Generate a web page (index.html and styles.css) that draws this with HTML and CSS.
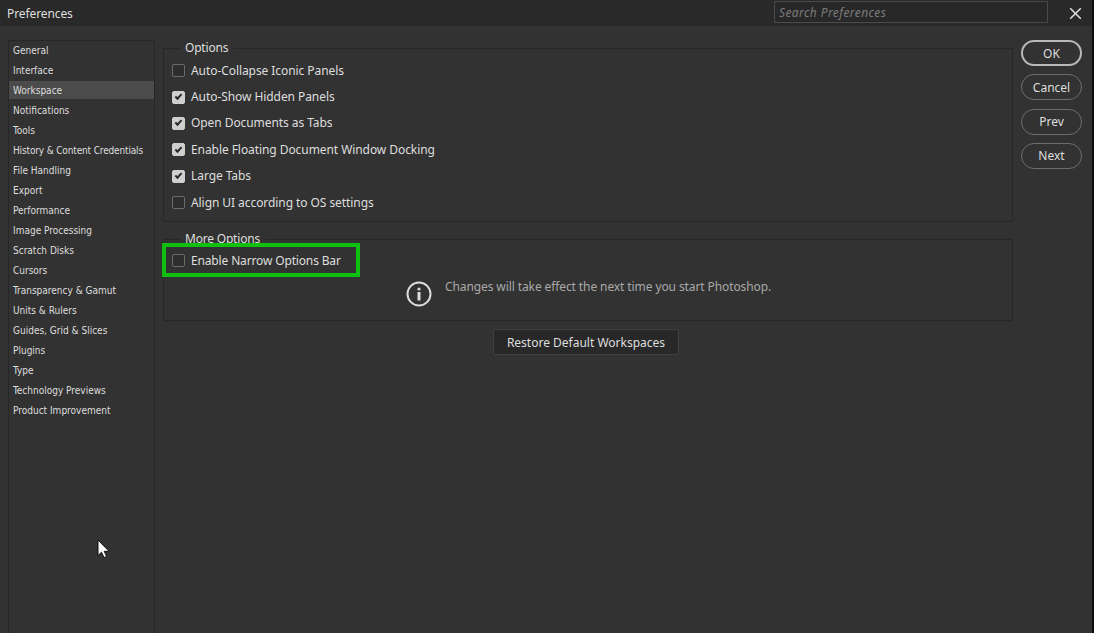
FILE: index.html
```html
<!DOCTYPE html>
<html lang="en">
  <head>
    <meta charset="UTF-8">
    <title>Preferences</title>
    <link rel="stylesheet" href="styles.css">
  </head>
  <body>
    <div class="dialog">
      <!-- Title bar -->
      <header class="title-bar">
        <div class="title">Preferences</div>
        <input type="text" class="search-box" placeholder="Search Preferences">
        <button class="close" aria-label="Close">
          <svg width="13" height="13" viewBox="0 0 13 13"><path d="M1.2 1.2 11.8 11.8M11.8 1.2 1.2 11.8"/></svg>
        </button>
      </header>
      <div class="content">
        <!-- Categories -->
        <ul class="sidebar">
          <li>General</li>
          <li>Interface</li>
          <li class="selected">Workspace</li>
          <li>Notifications</li>
          <li>Tools</li>
          <li class="tight">History &amp; Content Credentials</li>
          <li>File Handling</li>
          <li>Export</li>
          <li>Performance</li>
          <li>Image Processing</li>
          <li>Scratch Disks</li>
          <li>Cursors</li>
          <li>Transparency &amp; Gamut</li>
          <li>Units &amp; Rulers</li>
          <li>Guides, Grid &amp; Slices</li>
          <li>Plugins</li>
          <li>Type</li>
          <li>Technology Previews</li>
          <li>Product Improvement</li>
        </ul>

        <!-- Workspace settings -->
        <main class="settings">
          <section class="group options">
            <h2 class="legend">Options</h2>
            <label class="check"><input type="checkbox"><span class="label">Auto-Collapse Iconic Panels</span></label>
            <label class="check"><input type="checkbox" checked><span class="label">Auto-Show Hidden Panels</span></label>
            <label class="check"><input type="checkbox" checked><span class="label">Open Documents as Tabs</span></label>
            <label class="check"><input type="checkbox" checked><span class="label">Enable Floating Document Window Docking</span></label>
            <label class="check"><input type="checkbox" checked><span class="label">Large Tabs</span></label>
            <label class="check"><input type="checkbox"><span class="label">Align UI according to OS settings</span></label>
          </section>
          <section class="group more">
            <h2 class="legend">More Options</h2>
            <label class="check"><input type="checkbox"><span class="label">Enable Narrow Options Bar</span></label>
            <div class="highlight"></div>
            <div class="notice">
              <svg width="26" height="26" viewBox="0 0 26 26">
                <circle cx="13" cy="13" r="11.5" fill="none" stroke="#dcdcdc" stroke-width="2"/>
                <circle cx="13" cy="8" r="1.6" fill="#dcdcdc"/>
                <rect x="11.5" y="11" width="3" height="8.5" fill="#dcdcdc"/>
              </svg>
              <p>Changes will take effect the next time you start Photoshop.</p>
            </div>
          </section>
          <button class="restore">Restore Default Workspaces</button>
        </main>

        <div class="actions">
          <button class="pill primary">OK</button>
          <button class="pill">Cancel</button>
          <button class="pill">Prev</button>
          <button class="pill">Next</button>
        </div>
      </div>

      <!-- Mouse pointer -->
      <svg class="pointer" width="13" height="20" viewBox="0 0 13 20">
        <path d="M1 1V16.5L4.5 13.2 7 18.6 9.6 17.4 7.2 12.3H12Z" fill="#fff" stroke="#111" stroke-width="1"/>
      </svg>
    </div>
  </body>
</html>
```
FILE: styles.css
```css
* {box-sizing:border-box;}
html,body{margin:0;padding:0;height:100%;overflow:hidden;}
body {font-family:'Noto Sans',sans-serif;font-size:12px;color:#dedede;background:#323232;}
button,input {font:inherit;color:inherit;letter-spacing:inherit;margin:0;}

.dialog {position:relative;display:flex;flex-direction:column;height:100%;border-right:2px solid #0c0c0c;background:#323232;}

/* Title bar */
.title-bar {display:flex;height:26px;background:#292929;padding:1px 10px 0 7px;}
.title {flex:1;line-height:25px;letter-spacing:-0.1px;}
.search-box {width:274px;height:22px;padding:0 4px;border:1px solid #4a4a4a;background:#282828;outline:none;letter-spacing:0.4px;}
.search-box::placeholder {color:#7b7b7b;font-style:italic;opacity:1;}
.close {display:flex;width:13px;height:13px;margin:6px 0 0 21px;padding:0;border:0;background:none;}
.close path {fill:none;stroke:#dcdcdc;stroke-width:1.6;}

.content {flex:1;display:flex;min-height:0;padding:14px 10px 0 8px;}

/* Category list */
.sidebar {display:flex;flex-direction:column;gap:2px;width:147px;margin:0 8px 0 0;padding:0;list-style:none;border:1px solid #272727;border-bottom:0;font-family:'DejaVu Sans Condensed','DejaVu Sans',sans-serif;font-stretch:condensed;font-size:10px;}
.sidebar li {height:18px;padding-left:4px;line-height:20px;white-space:nowrap;}
.sidebar .selected {background:#4b4b4b;}
.sidebar .tight {letter-spacing:-0.15px;}

/* Settings */
.settings {display:flex;flex-direction:column;width:850px;padding-top:8px;}
.group {position:relative;border:1px solid #272727;padding-left:8px;}
.options {height:174px;padding-top:9px;}
.more {height:82px;margin-top:17px;padding-top:8px;}
.legend {position:absolute;left:16px;top:-10px;margin:0;padding:0 5px;font-size:12px;font-weight:normal;line-height:18px;letter-spacing:-0.2px;background:#323232;}
.check {display:flex;align-items:center;gap:6px;height:26.4px;letter-spacing:-0.07px;}
.check .label {padding-bottom:2px;}
.check input {display:flex;justify-content:center;appearance:none;width:13px;height:13px;margin-bottom:1px;border:1px solid #6b6b6b;border-radius:2px;background:#2d2d2d;}
.check input:checked {border-color:#cfcfcf;background:#cfcfcf;}
.check input:checked::after {content:'';width:5px;height:2px;margin-top:2.5px;border:solid #292929;border-width:0 0 2px 2px;transform:rotate(-47deg);}
.more .check {letter-spacing:-0.15px;}
.highlight {position:absolute;left:-2px;top:3px;width:198px;height:34px;border:4px solid #0fc00f;}
.notice {display:flex;gap:13px;margin:7px 0 0 234px;color:#a9a9a9;letter-spacing:-0.1px;}
.notice p {margin:-3px 0 0;line-height:18px;}
.restore {align-self:center;width:186px;height:26px;margin:8px 4px 0 0;padding:0;border:1px solid #414141;border-radius:2px;background:#282828;}

/* Dialog buttons */
.actions {display:flex;flex-direction:column;gap:8.3px;margin-left:8px;}
.pill {width:61px;height:26px;padding:0;border:1.5px solid #6d6d6d;border-radius:13px;background:none;}
.primary {border:2px solid #b9b9b9;}

.pointer {position:absolute;left:97px;top:539px;}
```
